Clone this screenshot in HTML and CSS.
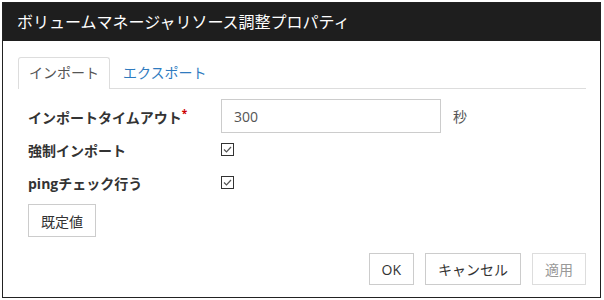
FILE: index.html
```html
<!DOCTYPE html>
<html lang="ja">
<head>
  <meta charset="UTF-8" />
  <title>ボリュームマネージャリソース調整プロパティ</title>
  <link rel="stylesheet" href="styles.css">
</head>
<body>
  <div class="dialog">
    <div class="titlebar">ボリュームマネージャリソース調整プロパティ</div>
    <div class="content">
      <div class="tabs">
        <span class="tab active">インポート</span>
        <span class="tab">エクスポート</span>
      </div>
      <div class="form">
        <div class="row">
          <label class="name" for="timeout">インポートタイムアウト<sup>*</sup></label>
          <input class="text" id="timeout" type="text" value="300">
          <span class="unit">秒</span>
        </div>
        <div class="row">
          <span class="name">強制インポート</span>
          <span class="check"><svg width="13" height="13" viewBox="0 0 13 13"><rect x="0.5" y="0.5" width="12" height="12" fill="#fff" stroke="#333"/><path d="M3 6.5 L5.5 9 L10 4" fill="none" stroke="#555" stroke-width="1.2"/></svg></span>
        </div>
        <div class="row">
          <span class="name">pingチェック行う</span>
          <span class="check"><svg width="13" height="13" viewBox="0 0 13 13"><rect x="0.5" y="0.5" width="12" height="12" fill="#fff" stroke="#333"/><path d="M3 6.5 L5.5 9 L10 4" fill="none" stroke="#555" stroke-width="1.2"/></svg></span>
        </div>
      </div>
      <button class="btn default">既定値</button>
      <div class="footer">
        <button class="btn">OK</button>
        <button class="btn">キャンセル</button>
        <button class="btn" disabled>適用</button>
      </div>
    </div>
  </div>
</body>
</html>
```

FILE: styles.css
```css
html, body {
  margin: 0;
  background: #fff;
}
body {
  font-family: 'Open Sans', 'Noto Sans CJK JP', sans-serif;
  font-size: 14px;
  color: #333;
  padding: 2px;
}
.dialog {
  width: 597px;
  height: 294px;
  border: 1px solid #222;
  background: #fff;
}
.titlebar {
  height: 38px;
  line-height: 38px;
  background: #1e1e1e;
  color: #fff;
  font-size: 16px;
  padding-left: 14px;
}
.content {
  padding: 16px 14px 0 15px;
}
.tabs {
  display: flex;
  gap: 2px;
  border-bottom: 1px solid #ddd;
  height: 31px;
}
.tab {
  display: block;
  padding: 0 10px;
  line-height: 30px;
  border: 1px solid transparent;
  border-bottom: none;
  border-radius: 3px 3px 0 0;
  color: #2f7bbf;
}
.tab.active {
  color: #555;
  border-color: #ddd;
  background: #fff;
  height: 31px;
}
.form {
  margin-top: 10px;
  padding-left: 10px;
}
.row {
  display: flex;
  align-items: center;
  height: 33px;
}
.row:first-child {
  height: 34px;
}
.name {
  width: 193px;
  font-weight: bold;
  color: #333;
}
.name sup {
  color: #c00;
  font-size: 10px;
  vertical-align: 6px;
}
.text {
  box-sizing: border-box;
  width: 220px;
  height: 34px;
  border: 1px solid #ccc;
  padding: 0 12px;
  font-family: inherit;
  font-size: 14px;
  color: #555;
  outline: none;
}
.unit {
  margin-left: 12px;
  color: #555;
}
.check {
  display: flex;
}
.btn {
  box-sizing: border-box;
  height: 32px;
  padding: 0 12px;
  border: 1px solid #ccc;
  background: #fff;
  font-family: inherit;
  font-size: 14px;
  color: #333;
}
.btn:disabled {
  color: #999;
  border-color: #ddd;
}
.btn.default {
  height: 33px;
  margin: 5px 0 0 10px;
  padding: 0 12px;
}
.footer {
  display: flex;
  justify-content: flex-end;
  gap: 11px;
  margin-top: 16px;
}
```
